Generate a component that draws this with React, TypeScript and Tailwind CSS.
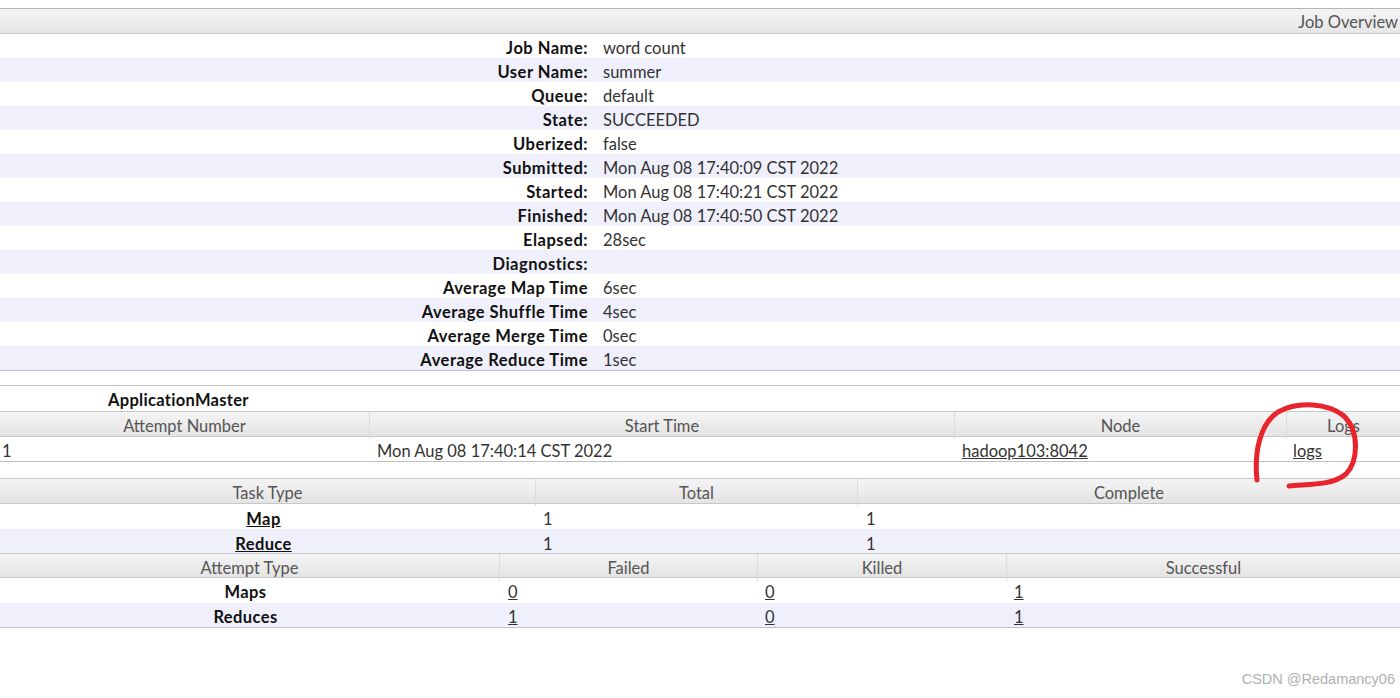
import React from 'react';

const overview: [string, string][] = [
  ['Job Name:', 'word count'],
  ['User Name:', 'summer'],
  ['Queue:', 'default'],
  ['State:', 'SUCCEEDED'],
  ['Uberized:', 'false'],
  ['Submitted:', 'Mon Aug 08 17:40:09 CST 2022'],
  ['Started:', 'Mon Aug 08 17:40:21 CST 2022'],
  ['Finished:', 'Mon Aug 08 17:40:50 CST 2022'],
  ['Elapsed:', '28sec'],
  ['Diagnostics:', ''],
  ['Average Map Time', '6sec'],
  ['Average Shuffle Time', '4sec'],
  ['Average Merge Time', '0sec'],
  ['Average Reduce Time', '1sec'],
];

const headCell =
  'flex items-center justify-center pt-[2px] text-[#555] border-l border-[#dcdcdc] first:border-l-0';

function HeadRow({ cols, labels, h }: { cols: string; labels: string[]; h: string }) {
  return (
    <div
      className={`grid ${cols} ${h} bg-gradient-to-b from-[#f4f4f4] to-[#e4e4e4] border-t border-b border-[#c8c8c8]`}
    >
      {labels.map((l) => (
        <div key={l} className={headCell}>
          {l}
        </div>
      ))}
    </div>
  );
}

export default function App() {
  return (
    <div className="relative w-[1400px] h-[698px] bg-white overflow-hidden font-['Lato',sans-serif] text-[16.5px] text-[#222]">
      <div className="h-[8px]" />

      {/* Job Overview */}
      <div className="border-t border-[#b4b4b4]">
        <div className="h-[25px] pt-[2px] bg-gradient-to-b from-[#f4f4f4] to-[#e6e6e6] border-b border-[#c8c8c8] flex items-center justify-end pr-[2px] text-[#555]">
          Job Overview
        </div>
        <div className="border-b border-[#c0c0c0]">
          {overview.map(([k, v], i) => (
            <div
              key={k}
              className={`h-[24px] pt-[2px] grid grid-cols-[588px_1fr] items-center ${
                i % 2 === 1 ? 'bg-[#f0f0fc]' : 'bg-white'
              }`}
            >
              <div className="text-right font-bold text-[#111] tracking-[0.5px]">{k}</div>
              <div className="pl-[15px] text-[#333]">{v}</div>
            </div>
          ))}
        </div>
      </div>

      <div className="h-[14px]" />

      {/* ApplicationMaster */}
      <div className="border-t border-[#c0c0c0]">
        <div className="h-[25px] pt-[3px] flex items-center pl-[108px] font-bold text-[#111] tracking-[0.3px]">
          ApplicationMaster
        </div>
        <HeadRow
          cols="grid-cols-[369px_585px_332px_114px]"
          h="h-[26px]"
          labels={['Attempt Number', 'Start Time', 'Node', 'Logs']}
        />
        <div className="grid grid-cols-[369px_585px_332px_114px] h-[25px] pt-[2px] items-center border-b border-[#c0c0c0] text-[#333]">
          <div className="pl-[2px]">1</div>
          <div className="pl-[8px]">Mon Aug 08 17:40:14 CST 2022</div>
          <div className="pl-[8px]">
            <span className="underline">hadoop103:8042</span>
          </div>
          <div className="pl-[7px]">
            <span className="underline">logs</span>
          </div>
        </div>
      </div>

      <div className="h-[16px]" />

      {/* Tasks */}
      <div>
        <HeadRow
          cols="grid-cols-[535px_322px_543px]"
          h="h-[26px]"
          labels={['Task Type', 'Total', 'Complete']}
        />
        {[
          ['Map', '1', '1'],
          ['Reduce', '1', '1'],
        ].map(([t, total, done], i) => (
          <div
            key={t}
            className={`grid grid-cols-[535px_322px_543px] h-[24.5px] pt-[3px] items-center text-[#333] ${
              i % 2 === 1 ? 'bg-[#f0f0fc]' : 'bg-white'
            }`}
          >
            <div className="text-center pr-[8px] font-bold text-[#111] tracking-[0.4px]">
              <span className="underline">{t}</span>
            </div>
            <div className="pl-[8px]">{total}</div>
            <div className="pl-[9px]">{done}</div>
          </div>
        ))}
        <HeadRow
          cols="grid-cols-[499px_258px_249px_394px]"
          h="h-[25px]"
          labels={['Attempt Type', 'Failed', 'Killed', 'Successful']}
        />
        {[
          ['Maps', '0', '0', '1'],
          ['Reduces', '1', '0', '1'],
        ].map(([t, f, k, s], i) => (
          <div
            key={t}
            className={`grid grid-cols-[499px_258px_249px_394px] h-[24.5px] pt-[2px] items-center text-[#333] ${
              i % 2 === 1 ? 'bg-[#f0f0fc]' : 'bg-white'
            }`}
          >
            <div className="text-center pr-[8px] font-bold text-[#111] tracking-[0.4px]">{t}</div>
            <div className="pl-[9px]">
              <span className="underline">{f}</span>
            </div>
            <div className="pl-[8px]">
              <span className="underline">{k}</span>
            </div>
            <div className="pl-[8px]">
              <span className="underline">{s}</span>
            </div>
          </div>
        ))}
        <div className="border-t border-[#c0c0c0]" />
      </div>

      {/* hand-drawn highlight around logs */}
      <svg
        className="absolute left-0 top-0 pointer-events-none"
        width="1400"
        height="698"
      >
        <path
          d="M1257 480 C1254 452 1260 424 1278 412 C1298 401 1328 403 1344 416 C1360 432 1358 462 1346 474 C1332 486 1306 484 1289 486"
          fill="none"
          stroke="#e8242c"
          strokeWidth="5"
          strokeLinecap="round"
        />
      </svg>

      <div className="absolute right-[5px] bottom-[7px] text-[14.5px] text-[#b0b0b0] font-['Liberation_Sans',sans-serif]">
        CSDN @Redamancy06
      </div>
    </div>
  );
}
